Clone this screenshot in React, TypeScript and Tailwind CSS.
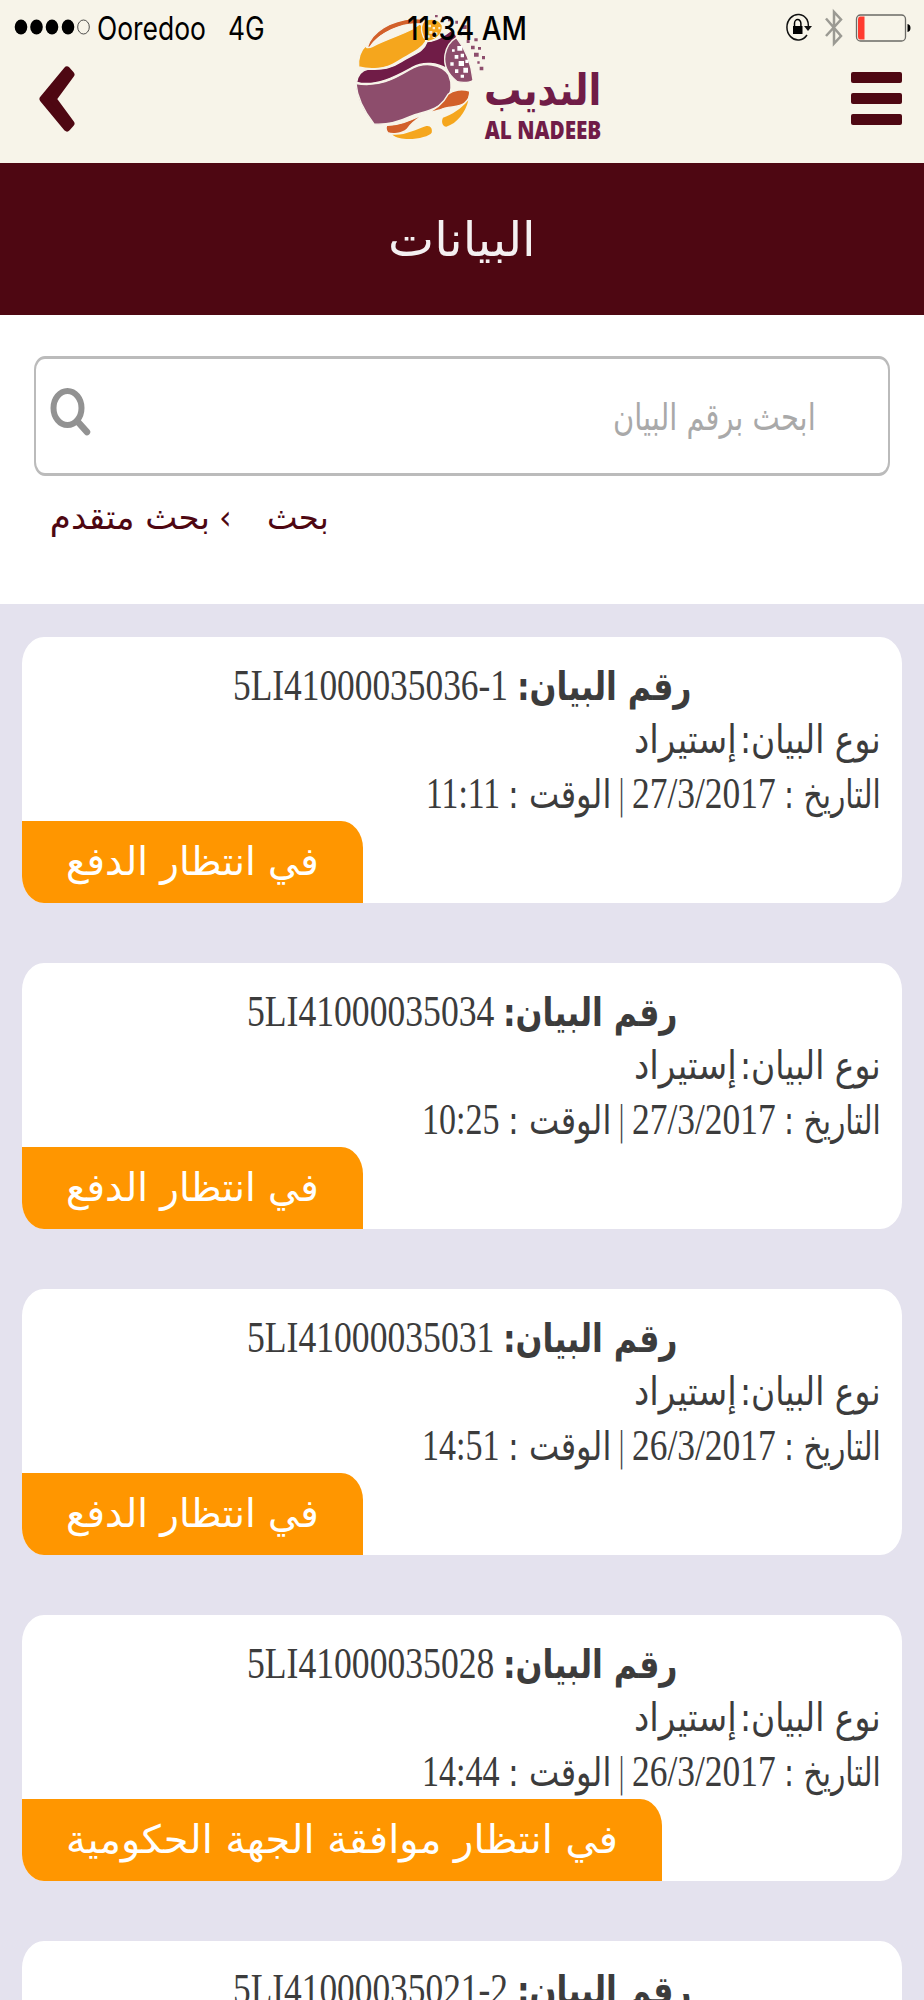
import { useLayoutEffect, useRef, useState } from "react";
import clsx from "clsx";

type FitProps = {
  w: number;
  children: string;
  ltr?: boolean;
  className?: string;
};

// Condenses a piece of text so it fills exactly w pixels
function Fit({ w, children, ltr, className }: FitProps) {
  const ref = useRef<HTMLSpanElement>(null);
  const [scale, setScale] = useState(1);

  useLayoutEffect(() => {
    if (ref.current) setScale(w / ref.current.offsetWidth);
  }, [w, children]);

  return (
    <span dir={ltr ? "ltr" : "rtl"} className={clsx("inline-block shrink-0 whitespace-nowrap", className)} style={{ width: w }}>
      <span
        ref={ref}
        className={clsx("inline-block", ltr ? "origin-left" : "origin-right")}
        style={{ transform: `scaleX(${scale})` }}
      >
        {children}
      </span>
    </span>
  );
}

function Logo() {
  return (
    <svg className="absolute left-[353px] top-[13px] h-[130px] w-[254px] overflow-visible" viewBox="70 40 760 390">
      <g stroke="#f7f4e9" strokeWidth="4" strokeLinejoin="round">
        <path fill="#d2602a" d="M112 143C125 96 183 62 250 57C268 56 284 60 290 66L270 73C212 68 148 101 119 143Z" />
        <path fill="#f5a61d" d="M109 136C105 148 120 144 128 140C165 121 212 106 248 88L270 72C283 84 290 108 287 126C272 151 239 163 199 188C168 208 122 212 86 202C84 178 92 152 109 136Z" />
        <path fill="#701c47" d="M80 248C83 226 96 212 115 208C161 211 184 205 214 186C254 161 280 158 291 126C326 125 344 104 362 94C377 103 384 110 378 121C347 138 338 180 350 207C324 190 281 184 247 203C201 228 139 263 80 248Z" />
        <path fill="#8d4d6c" d="M78 252C143 264 193 238 238 211C282 184 336 193 356 226C367 251 366 280 348 300C322 332 282 335 241 350C199 369 165 376 132 373C104 337 82 299 78 252Z" />
        <path fill="#8d4d6c" d="M379 114C404 145 423 186 429 241C424 249 397 250 382 246C356 226 340 199 345 165C349 143 363 123 379 114Z" />
        <path fill="#f5a61d" d="M281 66C297 54 326 56 337 77C340 101 319 121 295 125C278 121 267 83 281 66Z" />
        <path fill="#d2602a" d="M170 377C207 378 243 361 279 345C314 332 339 314 354 284C370 270 397 268 419 274C420 288 413 303 403 311C386 325 355 318 329 331C288 340 254 356 231 389C216 403 185 405 173 399C168 391 167 383 170 377Z" />
      </g>
      <path fill="#f5a61d" d="M187 405C223 409 257 389 289 379C302 377 308 387 305 399C296 415 215 429 187 405Z" />
      <path fill="#f5a61d" d="M415 302C407 338 381 372 349 381C337 380 333 365 339 354C364 347 395 326 415 302Z" />
      <path fill="#f7f4e9" d="M121 138C146 98 210 73 264 76C237 98 170 112 121 138Z" />
      <g fill="#fff">
        <path d="M382 139h15v14h-15zM366 149h8v7h-8zM374 166h11v11h-11zM392 162h10v11h-10zM361 188h10v10h-10zM386 184h16v15h-16zM406 180h9v10h-9zM375 209h10v11h-10zM400 204h14v15h-14zM392 225h10v9h-10z" />
        <path opacity=".8" d="M295 75h8v8h-8zM308 82h7v7h-7zM298 94h9v8h-9zM314 98h8v8h-8zM292 107h7v7h-7zM325 82h6v7h-6zM308 109h7v6h-7z" />
      </g>
      <path
        fill="#8d4d6c"
        d="M315 46h8v7h-8zM336 51h9v9h-9zM354 57h8v8h-8zM376 63h8v9h-8zM397 77h13v11h-13zM388 98h8v9h-8zM410 121h9v9h-9zM433 116h10v9h-10zM423 138h11v11h-11zM444 142h9v8h-9zM432 159h14v12h-14zM456 169h9v10h-9zM442 185h7v7h-7zM449 201h11v11h-11z"
      />
      <g fill="#701c47" fontFamily="DejaVu Sans, sans-serif" fontWeight="bold">
        <text x="814" y="316" fontSize="130" textLength="352" lengthAdjust="spacingAndGlyphs" direction="rtl">النديب</text>
        <text x="464" y="419" fontSize="74" textLength="350" lengthAdjust="spacingAndGlyphs" fontFamily="Open Sans, sans-serif" fontWeight="800">
          AL NADEEB
        </text>
      </g>
    </svg>
  );
}

function StatusIcons() {
  return (
    <svg className="h-[40px] w-[128px]" viewBox="0 0 128 40">
      {/* orientation lock */}
      <path d="M22 28A11.2 12.7 0 1 1 22 12.5Q23.5 15 23.5 20" fill="none" stroke="#111" strokeWidth="1.5" />
      <path d="M19 19h8l-4 5z" fill="#111" />
      <path d="M8 19h9.500v8h-9.500z" fill="#000" />
      <path d="M9.500 20v-3.500a3.200 4 0 0 1 6.400 0V20" fill="none" stroke="#000" strokeWidth="1.500" />
      {/* bluetooth */}
      <path d="M41 11.500L56 29L49 36.500V5L56 12.500L41 29" fill="none" stroke="#9b9a93" strokeWidth="2.500" />
      {/* battery */}
      <rect x="71.500" y="8" width="49" height="26" rx="4" fill="none" stroke="#6b6a66" strokeWidth="1.300" />
      <path d="M73 12a2 3 0 0 1 2-2.500h4.500v23H75a2 3 0 0 1-2-2.500z" fill="#ff3b30" />
      <path d="M122.500 17q3 .5 3 4t-3 4z" fill="#000" />
    </svg>
  );
}

function Header() {
  return (
    <header className="relative h-[163px] shrink-0 bg-[#f7f4e9]">
      <Logo />
      <div className="relative flex h-[54px] items-baseline font-[Inter,sans-serif] text-[32px] leading-[57px] text-black">
        <svg className="ml-[14px] h-[18px] w-[77px] self-center" viewBox="0 0 77 18">
          <ellipse cx="7" cy="9" rx="6.3" ry="7.4" />
          <ellipse cx="22.500" cy="9" rx="6.300" ry="7.400" />
          <ellipse cx="38" cy="9" rx="6.300" ry="7.400" />
          <ellipse cx="54" cy="9" rx="6.300" ry="7.400" />
          <ellipse cx="69.500" cy="9" rx="5.800" ry="7" fill="none" stroke="#222" strokeWidth=".8" />
        </svg>
        <Fit w={109} ltr className="ml-[6px]">Ooredoo</Fit>
        <Fit w={37} ltr className="ml-[22px]">4G</Fit>
        <Fit w={120} ltr className="ml-[142px] font-medium">11:34 AM</Fit>
        <div className="ml-auto mr-[11px] self-start pt-[7px]">
          <StatusIcons />
        </div>
      </div>
      <div className="relative flex justify-between pl-[39px] pr-[22px]">
        <svg className="mt-[11px] h-[68px] w-[37px]" viewBox="0 0 37 68">
          <path d="M28 5L32 9.500L14 34L32 58.500L28 63L4 34Z" fill="#4e0712" stroke="#4e0712" strokeWidth="7" strokeLinejoin="round" />
        </svg>
        <div className="flex flex-col gap-[10px] pt-[18px]">
          <span className="h-[11px] w-[51px] rounded-[2px] bg-[#4e0712]" />
          <span className="h-[11px] w-[51px] rounded-[2px] bg-[#4e0712]" />
          <span className="h-[11px] w-[51px] rounded-[2px] bg-[#4e0712]" />
        </div>
      </div>
    </header>
  );
}

function Search() {
  return (
    <section className="h-[289px] shrink-0 bg-white px-[34px] pt-[41px]">
      <div className="flex h-[120px] items-center justify-between rounded-[11px/14px] border-x-2 border-y-[3px] border-[#bbb] pl-[14px] pr-[72px]">
        <svg className="mb-[8px] h-[50px] w-[42px]" viewBox="0 0 42 50" fill="none" stroke="#929292">
          <ellipse cx="17.500" cy="21" rx="14" ry="17" strokeWidth="6" />
          <path d="M28 35L37 45" strokeWidth="6.500" strokeLinecap="round" />
        </svg>
        <Fit w={203} className="pt-[3px] text-[37px] text-[#a9a9a9]">ابحث برقم البيان</Fit>
      </div>
      <div className="flex items-baseline pl-[16px] pt-[18px] text-[34px] leading-[46px] text-[#4e0712]">
        <Fit w={160}>بحث متقدم</Fit>
        <Fit w={13} ltr className="ml-[9px]">‹</Fit>
        <Fit w={62} className="ml-[35px]">بحث</Fit>
      </div>
    </section>
  );
}

type Declaration = {
  number: string;
  numberWidth: number;
  date: string;
  time: string;
  timeWidth: number;
  status: string;
  statusWidth: number;
};

const declarations: Declaration[] = [
  { number: "5LI41000035036-1", numberWidth: 275, date: "27/3/2017", time: "11:11", timeWidth: 74, status: "في انتظار الدفع", statusWidth: 253 },
  { number: "5LI41000035034", numberWidth: 247, date: "27/3/2017", time: "10:25", timeWidth: 78, status: "في انتظار الدفع", statusWidth: 253 },
  { number: "5LI41000035031", numberWidth: 247, date: "26/3/2017", time: "14:51", timeWidth: 78, status: "في انتظار الدفع", statusWidth: 253 },
  { number: "5LI41000035028", numberWidth: 247, date: "26/3/2017", time: "14:44", timeWidth: 78, status: "في انتظار موافقة الجهة الحكومية", statusWidth: 552 },
  { number: "5LI41000035021-2", numberWidth: 275, date: "", time: "", timeWidth: 0, status: "", statusWidth: 0 },
];

const numeric = "font-['Liberation_Serif',serif] text-[45px]";

function Card({ item }: { item: Declaration }) {
  return (
    <article className="flex h-[266px] shrink-0 flex-col overflow-hidden rounded-[22px/27px] bg-white text-[39px] leading-[54px] text-[#3c3c3c]">
      <div dir="rtl" className="mt-[21px] flex h-[54px] items-baseline justify-center gap-[9px]">
        <Fit w={175} className="font-bold">رقم البيان:</Fit>
        <Fit w={item.numberWidth} ltr className={numeric}>{item.number}</Fit>
      </div>
      {item.date && (
        <>
          <div dir="rtl" className="mt-px flex h-[54px] items-baseline gap-[3px] pr-[21px]">
            <Fit w={141}>نوع البيان:</Fit>
            <Fit w={103}>إستيراد</Fit>
          </div>
          <div dir="rtl" className="-mt-px flex h-[54px] items-baseline gap-[8px] pr-[21px]">
            <Fit w={97}>التاريخ :</Fit>
            <Fit w={144} ltr className={numeric}>{item.date}</Fit>
            <Fit w={5}>|</Fit>
            <Fit w={103}>الوقت :</Fit>
            <Fit w={item.timeWidth} ltr className={numeric}>{item.time}</Fit>
          </div>
          <div dir="ltr" className="mt-auto flex h-[82px] self-start rounded-tr-[22px_27px] bg-[#ff9600] pl-[44px] pr-[44px] pt-[14px] text-white">
            <Fit w={item.statusWidth}>{item.status}</Fit>
          </div>
        </>
      )}
    </article>
  );
}

export default function App() {
  return (
    <div className="flex h-[2000px] w-[924px] flex-col overflow-hidden bg-[#e4e2ee] font-['DejaVu_Sans',sans-serif]">
      <Header />
      <div className="flex h-[152px] shrink-0 items-center justify-center bg-[#4e0712] text-[48px] text-[#f4f0f1]">
        <Fit w={148}>البيانات</Fit>
      </div>
      <Search />
      <main className="flex flex-col gap-[60px] px-[22px] pt-[33px]">
        {declarations.map((item) => (
          <Card key={item.number} item={item} />
        ))}
      </main>
    </div>
  );
}
